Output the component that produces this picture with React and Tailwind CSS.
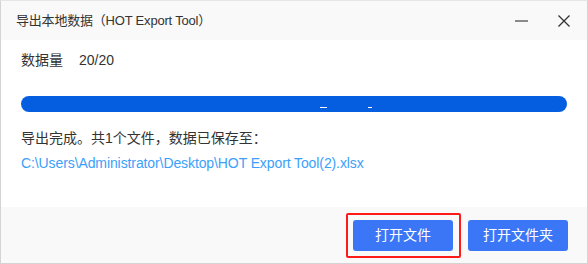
export default function App() {
  const font = { fontFamily: '"Liberation Sans", "Noto Sans CJK SC", sans-serif' };
  return (
    <div
      className="flex h-[264px] w-[588px] flex-col border border-[#d4d4d4] border-t-[#e6e6e6] bg-white text-[#333]"
      style={font}
    >
      <div className="flex h-[39px] items-center bg-[#f9f9f9] pl-[15px] pr-[17px]">
        <span className="flex-1 text-[13px] tracking-[-0.2px] text-[#333]">导出本地数据（HOT Export Tool）</span>
        <span className="block h-[2px] w-[13px] bg-[#8a8a8a]" />
        <svg className="ml-[30px]" width="12" height="12" viewBox="0 0 12 12">
          <path d="M0.5 0.5 L11.5 11.5 M11.5 0.5 L0.5 11.5" stroke="#333" strokeWidth="1.3" />
        </svg>
      </div>
      <div className="flex-1 px-[20px] pt-[8px]">
        <div className="flex items-center text-[14px] leading-[24px]">
          <span>数据量</span>
          <span className="ml-[16px]">20/20</span>
        </div>
        <div className="relative mt-[24px] h-[16px] w-[546px] rounded-full bg-[#055de0]">
          <span className="absolute left-[299px] top-[11px] h-px w-[7px] bg-white" />
          <span className="absolute left-[347px] top-[11px] h-px w-[4px] bg-white" />
        </div>
        <p className="mt-[14px] text-[14px] leading-[25px] text-[#333]">导出完成。共1个文件，数据已保存至：</p>
        <p className="text-[14px] leading-[25px] tracking-[-0.1px] text-[#3ca0fa]">
          C:\Users\Administrator\Desktop\HOT Export Tool(2).xlsx
        </p>
      </div>
      <div className="flex h-[56px] items-center justify-end gap-[7px] bg-[#f9f9f9] pr-[19px]">
        <div className="rounded-[2px] border-2 border-[#ff1a1a] py-[5px] pl-[5px] pr-[6px]">
          <button className="h-[31px] w-[100px] rounded-[3px] bg-[#3a76f6] text-[14px] text-white">打开文件</button>
        </div>
        <button className="h-[31px] w-[100px] rounded-[3px] bg-[#3a76f6] text-[14px] text-white">打开文件夹</button>
      </div>
    </div>
  );
}
